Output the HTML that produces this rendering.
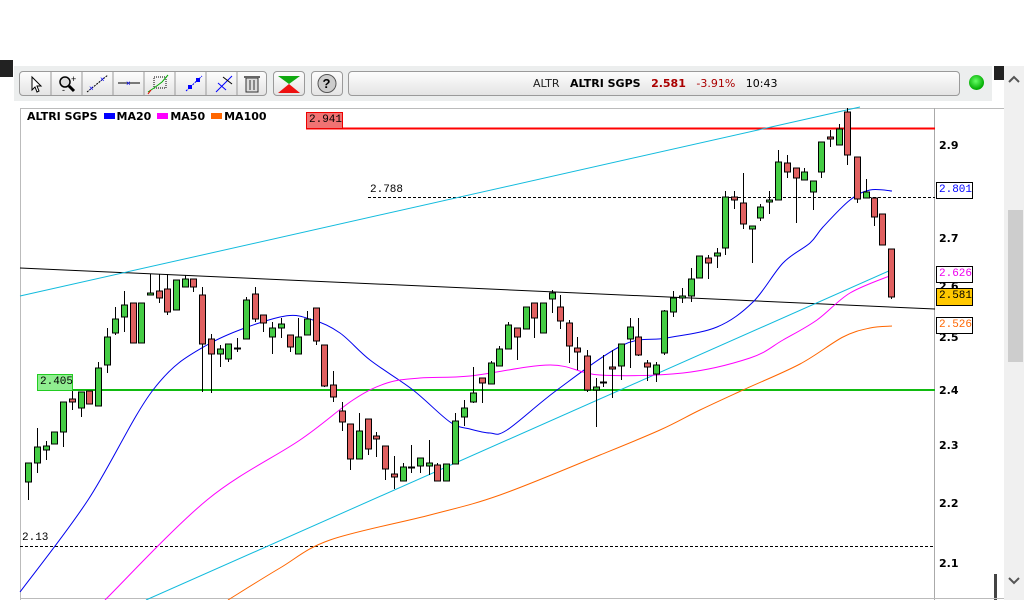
<!DOCTYPE html>
<html><head><meta charset="utf-8"><style>
*{margin:0;padding:0;box-sizing:border-box}
body{width:1024px;height:600px;overflow:hidden;background:#fff;font-family:"Liberation Sans",sans-serif;position:relative}
.abs{position:absolute}
.tb{left:14px;top:66px;width:978px;height:35px;background:#eceeee}
.btn{position:absolute;top:71px;height:25px;border:1px solid #9a9a9a;border-radius:4px;background:linear-gradient(#fdfdfd,#e4e4e4)}
.lbl{position:absolute;font-size:11px;font-family:"Liberation Mono",monospace;line-height:15px;padding:0 2px}
.ax{position:absolute;left:939px;font-size:11px;font-weight:bold;color:#000;font-family:"DejaVu Sans",sans-serif}
.sq{display:inline-block;width:11px;height:6px;vertical-align:1px;margin:0 2px 0 6px}
</style></head><body>
<div class="abs" style="left:0;top:60px;width:13px;height:17px;background:#222"></div>
<div class="abs tb"></div>
<div class="btn" style="left:19px;width:248px">
 <svg width="248" height="23" style="position:absolute;left:0;top:0">
  <g stroke="#9a9a9a"><line x1="31" y1="0" x2="31" y2="23"/><line x1="62" y1="0" x2="62" y2="23"/><line x1="93" y1="0" x2="93" y2="23"/><line x1="124" y1="0" x2="124" y2="23"/><line x1="155" y1="0" x2="155" y2="23"/><line x1="186" y1="0" x2="186" y2="23"/><line x1="217" y1="0" x2="217" y2="23"/></g>
  <path d="M12 5 L12 18 L15 15 L17 20 L19 19 L17 14 L21 14 Z" fill="#fff" stroke="#000"/>
  <circle cx="45" cy="10" r="5" fill="#ddd" stroke="#000" stroke-width="1.5"/><line x1="49" y1="14" x2="54" y2="19" stroke="#000" stroke-width="3"/><text x="51" y="10" font-size="9">+</text><text x="42" y="21" font-size="9">-</text>
  <line x1="67" y1="20" x2="88" y2="3" stroke="#000" stroke-dasharray="2,1"/><text x="69" y="19" font-size="8" fill="#00f">×</text><text x="80" y="10" font-size="8" fill="#00f">×</text>
  <line x1="98" y1="11" x2="120" y2="11" stroke="#000"/><text x="106" y="14" font-size="8" fill="#00f">×</text>
  <rect x="134" y="5" width="12" height="11" fill="none" stroke="#000" stroke-dasharray="1,1"/><path d="M128 20 L134 16 L142 10 L148 3" stroke="#0a0" fill="none"/><path d="M128 22 L131 18" stroke="#e00"/>
  <rect x="168" y="13" width="4" height="4" fill="#00f"/><rect x="176" y="6" width="4" height="4" fill="#00f"/><line x1="166" y1="19" x2="182" y2="4" stroke="#00f" stroke-dasharray="2,1"/>
  <line x1="196" y1="20" x2="212" y2="4" stroke="#00f"/><line x1="198" y1="11" x2="206" y2="18" stroke="#00f"/><line x1="203" y1="5" x2="212" y2="12" stroke="#000"/>
  <rect x="226" y="6" width="12" height="14" fill="#ddd" stroke="#333"/><rect x="224" y="4" width="16" height="2" fill="#666"/><g stroke="#333"><line x1="230" y1="8" x2="230" y2="18"/><line x1="234" y1="8" x2="234" y2="18"/></g>
 </svg></div>
<div class="btn" style="left:273px;width:32px"><svg width="30" height="23"><path d="M4 4 L26 4 L15 12 Z" fill="#1a1"/><path d="M4 21 L26 21 L15 12 Z" fill="#e11"/></svg></div>
<div class="btn" style="left:311px;width:32px"><svg width="30" height="23"><circle cx="15" cy="11.5" r="9" fill="#ccc" stroke="#555"/><text x="10.5" y="16" font-size="13" font-weight="bold">?</text></svg></div>
<div class="btn" style="left:348px;width:612px;font-size:11px;line-height:23px;padding-left:184px;font-family:'DejaVu Sans',sans-serif;white-space:nowrap">
 <span style="color:#222">ALTR</span>&nbsp;&nbsp;&nbsp;<b>ALTRI SGPS</b>&nbsp;&nbsp;&nbsp;<b style="color:#a00">2.581</b>&nbsp;&nbsp;&nbsp;<span style="color:#a00">-3.91%</span>&nbsp;&nbsp;&nbsp;10:43</div>
<div class="abs" style="left:969px;top:75px;width:15px;height:15px;border-radius:50%;background:radial-gradient(circle at 45% 40%,#6f6,#0a0 70%)"></div>
<div class="abs" style="left:1004px;top:66px;width:20px;height:534px;background:#f0f0f0"></div>
<div class="abs" style="left:994px;top:66px;width:10px;height:14px;background:#222"></div>
<div class="abs" style="left:1008px;top:210px;width:15px;height:152px;background:#cdcdcd"></div>
<svg class="abs" style="left:1004px;top:66px" width="20" height="534"><path d="M5 16 L10 11 L15 16" stroke="#555" stroke-width="2" fill="none"/><path d="M5 512 L10 517 L15 512" stroke="#555" stroke-width="2" fill="none"/></svg>
<div class="abs" style="left:994px;top:574px;width:3px;height:26px;background:#444"></div>
<svg id="ch" class="abs" style="left:0;top:0" width="1004" height="600"></svg>
<div class="abs" style="left:27px;top:110px;font-size:11px;font-weight:bold;font-family:'DejaVu Sans',sans-serif;white-space:nowrap">ALTRI SGPS<span class="sq" style="background:#00f"></span>MA20<span class="sq" style="background:#f0f"></span>MA50<span class="sq" style="background:#f60"></span>MA100</div>
<div class="lbl" style="left:306px;top:112px;width:37px;height:17px;background:#f07373;border:1px solid #e00">2.941</div>
<div class="lbl" style="left:37px;top:374px;width:36px;height:17px;background:#90ee90;border:1px solid #2c2">2.405</div>
<div class="lbl" style="left:368px;top:183px">2.788</div>
<div class="lbl" style="left:20px;top:531px">2.13</div>
<div class="ax" style="top:139px">2.9</div><div class="ax" style="top:232px">2.7</div><div class="ax" style="top:280px">2.6</div><div class="ax" style="top:331px">2.5</div><div class="ax" style="top:384px">2.4</div><div class="ax" style="top:439px">2.3</div><div class="ax" style="top:497px">2.2</div><div class="ax" style="top:557px">2.1</div>
<div class="lbl" style="left:936px;top:182px;width:37px;height:17px;background:#fff;border:1px solid #000;color:#00f">2.801</div>
<div class="lbl" style="left:936px;top:266px;width:37px;height:17px;background:#fff;border:1px solid #000;color:#e0e">2.626</div>
<div class="lbl" style="left:936px;top:288px;width:37px;height:18px;background:#ffc800;border:1px solid #000;color:#000">2.581</div>
<div class="lbl" style="left:936px;top:317px;width:37px;height:17px;background:#fff;border:1px solid #000;color:#f60">2.526</div>
<script>
var s='';
s+='<line x1="20" y1="108.5" x2="1004" y2="108.5" stroke="#bbb"/><line x1="20.5" y1="108" x2="20.5" y2="600" stroke="#bbb"/><line x1="934.5" y1="108" x2="934.5" y2="600" stroke="#aaa"/><line x1="20" y1="598.5" x2="1004" y2="598.5" stroke="#bbb"/>';
s+='<line x1="306" y1="128.5" x2="935" y2="128.5" stroke="#f00" stroke-width="2"/>';
s+='<line x1="37" y1="390" x2="935" y2="390" stroke="#1b1" stroke-width="2"/>';
s+='<line x1="368" y1="197.5" x2="935" y2="197.5" stroke="#000" stroke-dasharray="3,2"/>';
s+='<line x1="20" y1="546.5" x2="935" y2="546.5" stroke="#000" stroke-dasharray="3,2"/>';
s+='<line x1="20" y1="268" x2="935" y2="309" stroke="#000"/>';
s+='<line x1="20" y1="296" x2="860" y2="107" stroke="#1bd"/>';
s+='<line x1="146" y1="600" x2="891" y2="270" stroke="#1bd"/>';
function pl(p,c){var P=p.split(' ').map(function(q){return q.split(',').map(Number)});
var d='M'+P[0][0]+' '+P[0][1];
for(var i=0;i<P.length-1;i++){var p0=P[i-1]||P[i],p1=P[i],p2=P[i+1],p3=P[i+2]||p2;
d+=' C'+(p1[0]+(p2[0]-p0[0])/6)+' '+(p1[1]+(p2[1]-p0[1])/6)+' '+(p2[0]-(p3[0]-p1[0])/6)+' '+(p2[1]-(p3[1]-p1[1])/6)+' '+p2[0]+' '+p2[1];}
s+='<path fill="none" stroke="'+c+'" d="'+d+'"/>';}
pl("20,592 88,500 153,390 207,345 280,317 313,320 340,333 370,360 413,390 450,422 470,429 490,433 507,430 557,390 623,345 667,338 717,327 753,302 783,263 810,243 823,227 850,200 870,190 892,191","#00e");
pl("105,600 207,500 300,440 353,400 387,383 420,378 470,376 550,365 600,375 683,373 750,358 783,340 817,320 850,293 892,275","#f0f");
pl("228,600 280,568 330,540 430,515 500,495 600,455 660,430 700,410 743,390 800,364 843,337 870,328 892,326","#f60");
var C=[[28,463,482,463,500,'g'],[37,447,463,428,473,'g'],[46,446,450,441,460,'g'],[54,432,444,432,444,'g'],[63,402,432,402,447,'g'],[72,399,402,390,410,'r'],[81,392,408,392,417,'g'],[89,391,404,391,404,'r'],[98,368,406,362,406,'g'],[107,337,365,328,373,'g'],[115,319,333,307,335,'g'],[124,305,317,291,332,'g'],[133,303,343,303,343,'r'],[141,303,343,303,343,'g'],[150,293,295,274,295,'g'],[159,291,298,274,303,'r'],[167,289,312,274,315,'r'],[176,280,310,280,310,'g'],[185,279,287,275,287,'g'],[193,279,287,279,292,'r'],[202,295,344,287,392,'r'],[211,339,354,334,393,'r'],[220,349,354,345,367,'g'],[228,344,359,344,362,'g'],[237,348,349,338,352,'g'],[246,300,339,297,339,'g'],[255,294,319,287,322,'r'],[263,315,323,315,332,'r'],[272,328,337,322,354,'g'],[281,324,328,318,338,'g'],[290,335,347,335,352,'r'],[298,337,354,318,354,'g'],[307,319,335,311,335,'g'],[316,308,341,308,345,'r'],[324,345,386,345,387,'r'],[333,385,397,371,402,'r'],[342,411,422,402,431,'r'],[350,424,459,424,470,'r'],[359,431,459,413,459,'g'],[368,419,449,419,455,'r'],[376,436,439,432,457,'r'],[385,446,469,446,480,'r'],[394,474,477,456,489,'r'],[403,467,481,463,481,'g'],[411,467,467,445,473,'g'],[420,458,466,458,473,'g'],[429,463,466,440,475,'g'],[437,465,481,463,481,'r'],[446,464,481,464,481,'g'],[455,421,464,413,464,'g'],
[464,408,417,400,426,'g'],[473,393,402,367,403,'g'],[482,378,383,378,403,'r'],[491,363,384,361,384,'g'],[499,349,366,346,366,'g'],[508,325,349,322,349,'g'],[517,328,337,328,360,'r'],[526,307,329,307,329,'g'],[534,303,318,303,338,'r'],[543,303,333,303,333,'g'],[552,293,299,290,313,'g'],[560,307,321,295,329,'r'],[569,323,346,320,363,'r'],[577,348,352,337,370,'r'],[587,356,390,350,392,'r'],[596,387,390,378,427,'g'],[603,382,383,355,387,'g'],[612,367,369,350,398,'r'],[621,344,366,344,380,'g'],[630,327,339,318,368,'g'],[638,337,355,318,356,'r'],[647,363,367,360,381,'r'],[656,365,374,362,382,'g'],[664,311,353,310,355,'g'],[673,298,312,291,317,'g'],[682,296,298,288,303,'g'],[691,279,296,268,302,'g'],[699,256,278,256,278,'g'],[708,258,263,255,279,'r'],[717,253,256,248,268,'g'],[725,197,248,191,255,'g'],[734,197,200,191,209,'r'],[743,203,224,173,229,'r'],[752,226,229,226,263,'g'],[760,207,218,204,221,'g'],[769,200,202,191,214,'g'],[778,162,200,150,200,'g'],[787,163,172,155,178,'r'],[796,168,178,168,223,'r'],[804,172,180,168,180,'g'],[813,181,192,181,210,'g'],[821,142,172,142,178,'g'],[830,137,139,130,147,'r'],[839,129,145,124,145,'g'],[847,112,155,108,165,'r'],[857,157,199,157,203,'r'],[866,192,198,179,198,'g'],[874,198,217,198,226,'r'],[882,214,245,214,245,'r'],[891,249,297,249,299,'r']];
C.forEach(function(c){var x=c[0],t=c[1],b=c[2],h=c[3],l=c[4];var f=c[5]=='g'?'#4c4':'#e06060';
s+='<line x1="'+(x+.5)+'" y1="'+h+'" x2="'+(x+.5)+'" y2="'+l+'" stroke="#000"/>';
var hh=Math.max(b-t,1);s+='<rect x="'+(x-2.5)+'" y="'+t+'" width="6" height="'+hh+'" fill="'+f+'" stroke="#000"/>';});
document.getElementById('ch').innerHTML=s;
</script>
</body></html>
